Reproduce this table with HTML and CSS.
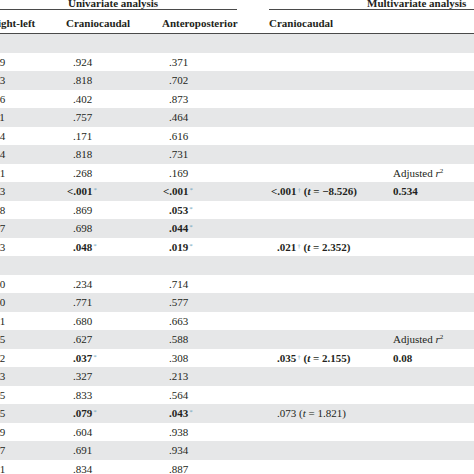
FILE: index.html
```html
<!DOCTYPE html>
<html>
<head>
<meta charset="utf-8">
<link rel="stylesheet" href="styles.css">
</head>
<body>
<div class="table">
  <div class="groups">
    <div class="g-uni"><span>Univariate analysis</span></div>
    <div class="g-multi"><span>Multivariate analysis</span></div>
  </div>
  <div class="row head">
    <div class="c1">Right-left</div>
    <div class="c2">Craniocaudal</div>
    <div class="c3">Anteroposterior</div>
    <div class="c4">Craniocaudal</div>
    <div class="c5"></div>
  </div>

  <div class="row"><div class="c1"></div><div class="c2"></div><div class="c3"></div><div class="c4"></div><div class="c5"></div></div>
  <div class="row"><div class="c1">.329</div><div class="c2">.924</div><div class="c3">.371</div><div class="c4"></div><div class="c5"></div></div>
  <div class="row"><div class="c1">.213</div><div class="c2">.818</div><div class="c3">.702</div><div class="c4"></div><div class="c5"></div></div>
  <div class="row"><div class="c1">.456</div><div class="c2">.402</div><div class="c3">.873</div><div class="c4"></div><div class="c5"></div></div>
  <div class="row"><div class="c1">.611</div><div class="c2">.757</div><div class="c3">.464</div><div class="c4"></div><div class="c5"></div></div>
  <div class="row"><div class="c1">.754</div><div class="c2">.171</div><div class="c3">.616</div><div class="c4"></div><div class="c5"></div></div>
  <div class="row"><div class="c1">.394</div><div class="c2">.818</div><div class="c3">.731</div><div class="c4"></div><div class="c5"></div></div>
  <div class="row"><div class="c1">.521</div><div class="c2">.268</div><div class="c3">.169</div><div class="c4"></div><div class="c5">Adjusted <i>r</i><sup>2</sup></div></div>
  <div class="row"><div class="c1">.003</div><div class="c2 b"><span class="lt">&lt;</span>.001<sup class="mk">*</sup></div><div class="c3 b"><span class="lt">&lt;</span>.001<sup class="mk">*</sup></div><div class="c4 b"><span class="lt">&lt;</span>.001<sup class="mk">†</sup> (<i>t</i> = −8.526)</div><div class="c5 b">0.534</div></div>
  <div class="row"><div class="c1">.128</div><div class="c2">.869</div><div class="c3 b">.053<sup class="mk">*</sup></div><div class="c4"></div><div class="c5"></div></div>
  <div class="row"><div class="c1">.417</div><div class="c2">.698</div><div class="c3 b">.044<sup class="mk">*</sup></div><div class="c4"></div><div class="c5"></div></div>
  <div class="row"><div class="c1">.083</div><div class="c2 b">.048<sup class="mk">*</sup></div><div class="c3 b">.019<sup class="mk">*</sup></div><div class="c4 b">.021<sup class="mk">†</sup> (<i>t</i> = 2.352)</div><div class="c5"></div></div>
  <div class="row"><div class="c1"></div><div class="c2"></div><div class="c3"></div><div class="c4"></div><div class="c5"></div></div>
  <div class="row"><div class="c1">.260</div><div class="c2">.234</div><div class="c3">.714</div><div class="c4"></div><div class="c5"></div></div>
  <div class="row"><div class="c1">.410</div><div class="c2">.771</div><div class="c3">.577</div><div class="c4"></div><div class="c5"></div></div>
  <div class="row"><div class="c1">.531</div><div class="c2">.680</div><div class="c3">.663</div><div class="c4"></div><div class="c5"></div></div>
  <div class="row"><div class="c1">.645</div><div class="c2">.627</div><div class="c3">.588</div><div class="c4"></div><div class="c5">Adjusted <i>r</i><sup>2</sup></div></div>
  <div class="row"><div class="c1">.162</div><div class="c2 b">.037<sup class="mk">*</sup></div><div class="c3">.308</div><div class="c4 b">.035<sup class="mk">†</sup> (<i>t</i> = 2.155)</div><div class="c5 b">0.08</div></div>
  <div class="row"><div class="c1">.373</div><div class="c2">.327</div><div class="c3">.213</div><div class="c4"></div><div class="c5"></div></div>
  <div class="row"><div class="c1">.285</div><div class="c2">.833</div><div class="c3">.564</div><div class="c4"></div><div class="c5"></div></div>
  <div class="row"><div class="c1">.945</div><div class="c2 b">.079<sup class="mk">*</sup></div><div class="c3 b">.043<sup class="mk">*</sup></div><div class="c4">.073 (<i>t</i> = 1.821)</div><div class="c5"></div></div>
  <div class="row"><div class="c1">.179</div><div class="c2">.604</div><div class="c3">.938</div><div class="c4"></div><div class="c5"></div></div>
  <div class="row"><div class="c1">.587</div><div class="c2">.691</div><div class="c3">.934</div><div class="c4"></div><div class="c5"></div></div>
  <div class="row"><div class="c1">.221</div><div class="c2">.834</div><div class="c3">.887</div><div class="c4"></div><div class="c5"></div></div>
</div>
</body>
</html>
```

FILE: styles.css
```css
html, body {
  margin: 0;
  padding: 0;
  background: #ffffff;
  overflow: hidden;
}
body {
  width: 474px;
  height: 474px;
  font-family: "Liberation Serif", "Times New Roman", serif;
  font-size: 11px;
  color: #231f20;
}
.table {
  margin-left: -20px;
  width: 520px;
}
.groups {
  display: flex;
  height: 11px;
}
.g-uni {
  width: 257px;
  height: 10px;
  border-bottom: 1px solid #4a4a4a;
  line-height: 7px;
  font-weight: bold;
  padding-left: 88px;
  box-sizing: border-box;
}
.g-multi {
  margin-left: 32px;
  flex: 1;
  height: 10px;
  border-bottom: 1px solid #4a4a4a;
  line-height: 7px;
  font-weight: bold;
  padding-left: 98px;
  box-sizing: border-box;
}
.row {
  display: grid;
  grid-template-columns: 86px 96px 107px 124px 1fr;
  height: 18.5px;
  line-height: 18.5px;
  white-space: nowrap;
}
.row:nth-child(odd) {
  background: #e6e7e8;
}
.row.head {
  background: #ffffff;
  height: 23px;
  padding-top: 3px;
  box-sizing: border-box;
  line-height: 19px;
  border-bottom: 1px solid #4a4a4a;
  font-weight: bold;
}
.row.head + .row {
  background: #e6e7e8;
}
.c1 { padding-left: 6px; }
.c2 { padding-left: 7px; }
.c3 { padding-left: 7px; }
.c4 { padding-left: 8px; }
.c5 { padding-left: 0; }
.row.head .c1 { padding-left: 10px; }
.row.head .c2, .row.head .c3, .row.head .c4 { padding-left: 0; }
.b { font-weight: bold; }
.lt { margin-left: -6px; }
.mk {
  font-size: 7px;
  font-weight: normal;
  color: #6fa3bd;
  vertical-align: 3px;
  line-height: 0;
  margin-left: 1px;
}
sup {
  font-size: 7px;
  vertical-align: 4px;
  line-height: 0;
}
```
